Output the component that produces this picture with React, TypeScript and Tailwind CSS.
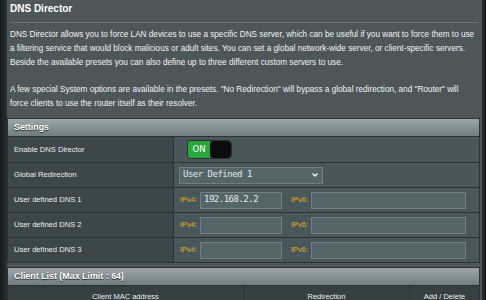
import { ChevronDown } from 'lucide-react';

const dnsRows = ['User defined DNS 1', 'User defined DNS 2', 'User defined DNS 3'];

function TextBox({ value = '', className = '' }: { value?: string; className?: string }) {
  return (
    <div
      className={`h-[17px] bg-[#55666b] border border-[#6f7f84] px-[3px] flex items-center text-[9px] tracking-[-0.5px] text-[#e4e8e9] font-['DejaVu_Sans_Mono',monospace] ${className}`}
    >
      {value}
    </div>
  );
}

export default function App() {
  return (
    <div className="w-[486px] h-[300px] overflow-hidden flex bg-[#1e2225] font-['Liberation_Sans',Arial,sans-serif] text-white">
      {/* left edge */}
      <div className="w-[7px] shrink-0 bg-gradient-to-r from-[#15191b] to-[#2a3033]" />

      <div className="w-[475px] shrink-0 bg-[#4d5659] flex flex-col">
        {/* title */}
        <div className="px-[3px] pt-[3px]">
          <h1 className="text-[10px] leading-[12px] font-bold">DNS Director</h1>
          <div className="mt-[7px] h-px bg-[#6c7679]" />
          <div className="mt-[5px] text-[8.2px] leading-[14px] text-[#f2f4f4] whitespace-nowrap">
            <p>
              DNS Director allows you to force LAN devices to use a specific DNS server, which can be useful if you want to force them to use
              <br />
              a filtering service that would block malicious or adult sites. You can set a global network-wide server, or client-specific servers.
              <br />
              Beside the available presets you can also define up to three different custom servers to use.
            </p>
            <p className="mt-[13px]">
              A few special System options are available in the presets. "No Redirection" will bypass a global redirection, and "Router" will
              <br />
              force clients to use the router itself as their resolver.
            </p>
          </div>
        </div>

        {/* settings table */}
        <div className="mt-[7px] w-[473px] border border-[#2c3437] bg-[#2c3437] flex flex-col gap-px text-[7.6px]">
          <div className="h-[17px] bg-gradient-to-b from-[#9aa6aa] to-[#717d81] px-[6px] flex items-center text-[8.9px] font-bold [text-shadow:0_1px_1px_#222]">
            Settings
          </div>

          <div className="flex h-[25px] gap-px">
            <div className="w-[165px] bg-[#3c474b] px-[6px] flex items-center text-[#eceeee]">Enable DNS Director</div>
            <div className="flex-1 bg-[#49565a] flex items-center pl-[13px]">
              <div className="flex h-[19px] w-[45px] rounded-[4px] overflow-hidden border border-[#2a2f31]">
                <div className="w-[22px] bg-[#2aa63a] flex items-center justify-center text-[8.5px] font-['DejaVu_Sans',sans-serif] text-white">
                  ON
                </div>
                <div className="flex-1 bg-[#0b0d0e] rounded-[4px]" />
              </div>
            </div>
          </div>

          <div className="flex h-[24px] gap-px">
            <div className="w-[165px] bg-[#3c474b] px-[6px] flex items-center text-[#eceeee]">Global Redirection</div>
            <div className="flex-1 bg-[#49565a] flex items-center pl-[5px]">
              <div className="w-[144px] h-[17px] bg-[#55666b] border border-[#6f7f84] pl-[3px] pr-[3px] flex items-center justify-between text-[9px] tracking-[-0.5px] text-[#e4e8e9] font-['DejaVu_Sans_Mono',monospace]">
                <span>User Defined 1</span>
                <ChevronDown className="w-[8px] h-[8px] text-white" strokeWidth={4} />
              </div>
            </div>
          </div>

          {dnsRows.map((label, i) => (
            <div key={label} className="flex h-[24px] gap-px">
              <div className="w-[165px] bg-[#3c474b] px-[6px] flex items-center text-[#eceeee]">{label}</div>
              <div className="flex-1 bg-[#49565a] flex items-center pl-[6px] text-[7.5px]">
                <span className="w-[20px] text-[#e0b21c]">IPv4:</span>
                <TextBox value={i === 0 ? '192.168.2.2' : ''} className="w-[82px]" />
                <span className="w-[20px] ml-[9px] text-[#e0b21c]">IPv6:</span>
                <TextBox className="w-[155px]" />
              </div>
            </div>
          ))}
        </div>

        {/* client list */}
        <div className="mt-[4px] w-[473px] border border-[#2c3437] bg-[#2c3437] flex flex-col gap-px text-[7.5px]">
          <div className="h-[17px] bg-gradient-to-b from-[#9aa6aa] to-[#717d81] px-[6px] flex items-center text-[8.9px] font-bold [text-shadow:0_1px_1px_#222]">
            Client List (Max Limit : 64)
          </div>
          <div className="flex h-[22px] gap-px text-[#eceeee]">
            <div className="w-[235px] bg-[#354043] flex items-center justify-center">Client MAC address</div>
            <div className="w-[165px] bg-[#354043] flex items-center justify-center">Redirection</div>
            <div className="flex-1 bg-[#354043] flex items-center justify-center">Add / Delete</div>
          </div>
        </div>
      </div>

      {/* right edge */}
      <div className="flex-1 bg-gradient-to-r from-[#2a3033] to-[#15191b]" />
    </div>
  );
}
